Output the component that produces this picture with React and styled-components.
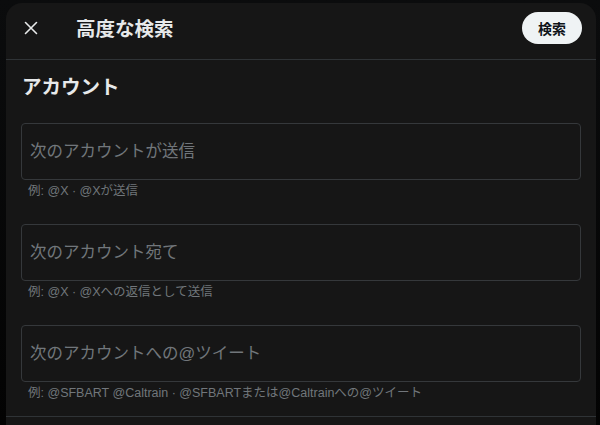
import React from "react";
import styled, { createGlobalStyle } from "styled-components";

const GlobalStyle = createGlobalStyle`
  html, body {
    margin: 0;
    padding: 0;
    background: #050505;
    overflow: hidden;
  }
  body {
    font-family: "Liberation Sans", "Noto Sans CJK JP", sans-serif;
    color: #e7e9ea;
  }
`;

const Backdrop = styled.div`
  height: 425px;
  padding: 3px 4px 0 6px;
  box-sizing: border-box;
  background: linear-gradient(180deg, #0b0c0d 0%, #030303 100%);
`;

const Panel = styled.div`
  height: 100%;
  background: #161616;
  border-radius: 16px 16px 0 0;
  overflow: hidden;
`;

const Header = styled.header`
  height: 57px;
  box-sizing: border-box;
  padding: 0 14px 7px 7px;
  display: flex;
  align-items: center;
  border-bottom: 1px solid #2f3336;
`;

const CloseButton = styled.button`
  width: 36px;
  height: 36px;
  border: none;
  background: transparent;
  color: #e7e9ea;
  display: flex;
  align-items: center;
  justify-content: center;
  padding: 0;
  cursor: pointer;
`;

const Title = styled.h1`
  margin: 0 0 0 27px;
  font-size: 19.5px;
  font-weight: 700;
  flex: 1;
`;

const SearchButton = styled.button`
  height: 32px;
  padding: 0 16px;
  border: none;
  border-radius: 16px;
  background: #eff3f4;
  color: #0f1419;
  font-family: inherit;
  font-size: 14px;
  font-weight: 700;
`;

const Section = styled.section`
  padding: 15px 15px 15px;
  border-bottom: 1px solid #2f3336;
`;

const Heading = styled.h2`
  margin: 0 0 24px 1px;
  font-size: 19.5px;
  line-height: 24px;
  font-weight: 700;
`;

const Field = styled.div`
  margin-bottom: ${(p) => (p.$last ? "0" : "25px")};
`;

const Input = styled.input`
  display: block;
  width: 100%;
  height: 57px;
  box-sizing: border-box;
  background: #161616;
  border: 1px solid #35383b;
  border-radius: 4px;
  padding: 0 8px;
  font-family: inherit;
  font-size: 16.5px;
  color: #e7e9ea;
  outline: none;
  &::placeholder {
    color: #71767b;
  }
`;

const Hint = styled.div`
  margin: 3px 0 0 7px;
  font-size: 12.5px;
  line-height: 16px;
  color: #71767b;
`;

const fields = [
  { placeholder: "次のアカウントが送信", hint: "例: @X · @Xが送信" },
  { placeholder: "次のアカウント宛て", hint: "例: @X · @Xへの返信として送信" },
  {
    placeholder: "次のアカウントへの@ツイート",
    hint: "例: @SFBART @Caltrain · @SFBARTまたは@Caltrainへの@ツイート",
  },
];

export default function App() {
  return (
    <>
      <GlobalStyle />
      <Backdrop>
        <Panel>
          <Header>
            <CloseButton aria-label="閉じる">
              <svg width="14" height="14" viewBox="0 0 14 14">
                <path
                  d="M1.5 1.5 L12.5 12.5 M12.5 1.5 L1.5 12.5"
                  stroke="currentColor"
                  strokeWidth="1.6"
                  strokeLinecap="round"
                />
              </svg>
            </CloseButton>
            <Title>高度な検索</Title>
            <SearchButton>検索</SearchButton>
          </Header>
          <Section>
            <Heading>アカウント</Heading>
            {fields.map((f, i) => (
              <Field key={f.placeholder} $last={i === fields.length - 1}>
                <Input placeholder={f.placeholder} />
                <Hint>{f.hint}</Hint>
              </Field>
            ))}
          </Section>
        </Panel>
      </Backdrop>
    </>
  );
}
